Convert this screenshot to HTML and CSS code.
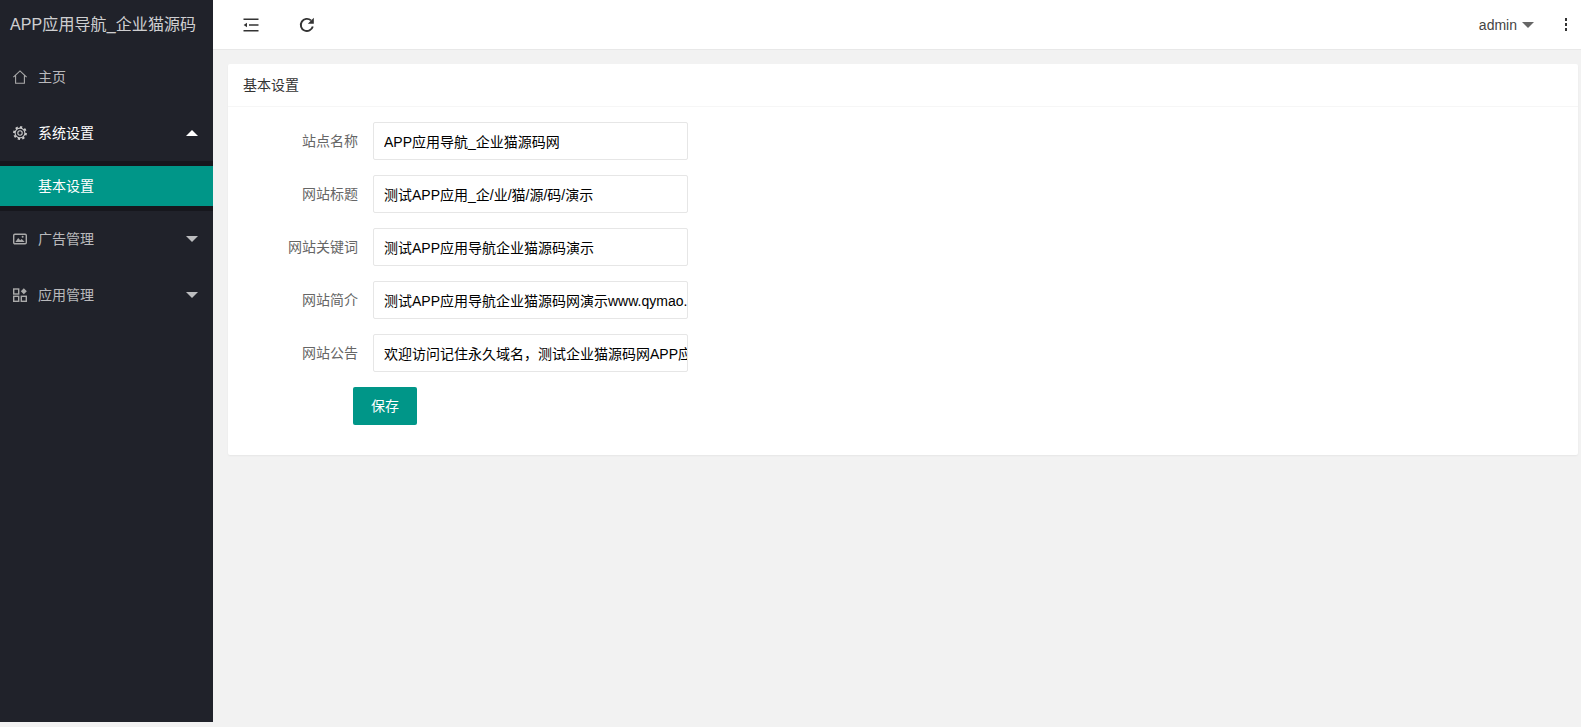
FILE: index.html
```html
<!DOCTYPE html>
<html lang="zh-CN">
<head>
<meta charset="utf-8">
<title>基本设置</title>
<link rel="stylesheet" href="styles.css">
</head>
<body>
<div class="app">
  <aside class="side">
    <div class="logo">APP应用导航_企业猫源码</div>
    <nav class="nav">
      <a class="nav-item"><svg class="ico" viewBox="0 0 14 14"><path d="M.4 7.2 7 .9l6.6 6.3M2.6 5.6v7.6h8.8V5.6"/></svg><span>主页</span></a>
      <a class="nav-item on"><svg class="ico gear" viewBox="0 0 14 14"><circle cx="7" cy="7" r="4.9"/><circle class="teeth" cx="7" cy="7" r="6" pathLength="32" stroke-dasharray="2 2"/><circle cx="7" cy="7" r="2.2"/></svg><span>系统设置</span><i class="caret up"></i></a>
      <div class="sub"><a class="sub-item">基本设置</a></div>
      <a class="nav-item"><svg class="ico bold" viewBox="0 0 14 14"><rect x=".7" y="2.2" width="12.6" height="9.6" rx="1.2"/><path class="fill" d="M2.4 10 5.2 6l2 2.2 1.5-1.2 3 3z"/><circle class="fill" cx="9.6" cy="4.8" r="1"/></svg><span>广告管理</span><i class="caret"></i></a>
      <a class="nav-item"><svg class="ico bold" viewBox="0 0 14 14"><rect x=".7" y="1" width="5" height="5"/><rect x=".7" y="8.3" width="5" height="5"/><rect x="8.3" y="8.3" width="5" height="5"/><path class="fill" d="M10.8.2 13.8 3.3l-3 3-3-3z"/></svg><span>应用管理</span><i class="caret"></i></a>
    </nav>
  </aside>
  <div class="body">
    <header class="top">
      <svg class="tool" viewBox="0 0 16 16"><path d="M.5 2.2h15M6 8h9.5M.5 13.8h15"/><path class="fill" d="M.6 8 4 5.8v4.4z"/></svg>
      <svg class="tool reload" viewBox="0 0 16 16"><path d="M13.8 9.6A6.1 6.1 0 1 1 12 3.4"/><path class="fill" d="M14.8.8v6H8.8z"/></svg>
      <div class="user">admin<i class="caret dark"></i></div>
      <div class="more"><b></b><b></b><b></b></div>
    </header>
    <main class="main">
      <section class="card">
        <div class="card-head">基本设置</div>
        <form class="form">
          <div class="row"><label>站点名称</label><input value="APP应用导航_企业猫源码网"></div>
          <div class="row"><label>网站标题</label><input value="测试APP应用_企/业/猫/源/码/演示"></div>
          <div class="row"><label>网站关键词</label><input value="测试APP应用导航企业猫源码演示"></div>
          <div class="row"><label>网站简介</label><input value="测试APP应用导航企业猫源码网演示www.qymao.cn"></div>
          <div class="row"><label>网站公告</label><input value="欢迎访问记住永久域名，测试企业猫源码网APP应用导航演示"></div>
          <button class="btn" type="button">保存</button>
        </form>
      </section>
    </main>
  </div>
</div>
</body>
</html>
```
FILE: styles.css
```css
* { box-sizing: border-box; }
html, body { margin: 0; height: 100%; overflow: hidden; }
body {
  font: 14px/24px "Liberation Sans", "Noto Sans CJK SC", sans-serif;
  color: #333;
  background: #f2f2f2;
}
.app { display: flex; height: 722px; }
.side { width: 213px; flex: none; background: #20222a; }
.logo {
  height: 49px;
  line-height: 49px;
  padding-left: 10px;
  font-size: 16px;
  letter-spacing: .1px;
  color: rgba(255,255,255,.8);
  white-space: nowrap;
}
.nav-item {
  display: flex;
  align-items: center;
  height: 56px;
  padding-left: 13px;
  color: rgba(255,255,255,.7);
  position: relative;
}
.nav-item span { margin-left: 11px; }
.nav-item.on { color: #fff; }
.ico { width: 14px; height: 14px; fill: none; stroke: #aaa; stroke-width: 1.1; flex: none; overflow: visible; }
.ico.bold { stroke-width: 1.4; }
.ico .fill { fill: #aaa; stroke: none; }
.ico.gear { stroke: #ccc; stroke-width: 1.1; }
.ico.gear .teeth { stroke-width: 1.8; }
.caret {
  position: absolute;
  right: 15px;
  top: 25px;
  border: 6px solid transparent;
  border-top: 6px solid rgba(255,255,255,.7);
  border-bottom: 0;
}
.caret.up { border-top: 0; border-bottom: 6px solid #fff; }
.sub { background: rgba(0,0,0,.3); padding: 5px 0; }
.sub-item {
  display: block;
  height: 40px;
  line-height: 40px;
  padding-left: 38px;
  background: #009688;
  color: #fff;
}
.body { flex: 1; min-width: 0; }
.top {
  display: flex;
  align-items: center;
  height: 50px;
  background: #fff;
  border-bottom: 1px solid #e8e8e8;
  padding-left: 30px;
  color: #333;
}
.tool { width: 16px; height: 16px; fill: none; stroke: #333; stroke-width: 1.5; flex: none; }
.tool .fill { fill: #333; stroke: none; }
.tool.reload { margin-left: 40px; stroke-width: 1.9; }
.user { margin-left: auto; font-size: 14px; color: #444; position: relative; padding-right: 17px; }
.caret.dark { right: 0; top: 9px; border-top-color: #666; }
.more { display: flex; flex-direction: column; gap: 2.5px; margin: 0 14px 0 30.5px; }
.more b { width: 2.5px; height: 2.5px; background: #333; }
.main { padding: 14px 3px 0 15px; }
.card { background: #fff; border-radius: 2px; box-shadow: 0 1px 2px rgba(0,0,0,.05); height: 391px; }
.card-head { height: 43px; line-height: 42px; padding-left: 15px; border-bottom: 1px solid #f6f6f6; }
.form { padding: 15px 0 0 15px; }
.row { display: flex; align-items: center; height: 38px; margin-bottom: 15px; }
.row label { width: 115px; text-align: right; color: #666; margin-right: 15px; white-space: nowrap; }
.row input {
  width: 315px;
  height: 38px;
  padding: 0 0 0 10px;
  border: 1px solid #e6e6e6;
  border-radius: 2px;
  font: inherit;
  color: #000;
  background: #fff;
  outline: none;
}
.btn {
  display: block;
  width: 64px;
  height: 38px;
  margin-left: 110px;
  border: 0;
  border-radius: 2px;
  background: #009688;
  color: #fff;
  font: inherit;
}
```
